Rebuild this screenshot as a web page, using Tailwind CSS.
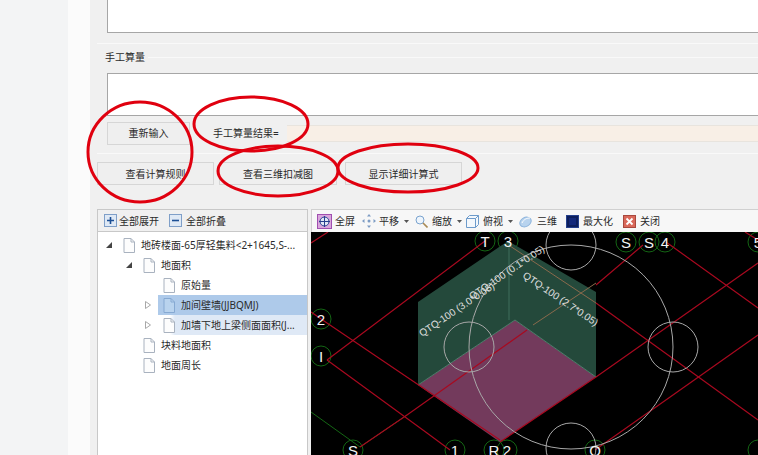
<!DOCTYPE html>
<html lang="zh">
<head>
    <meta charset="UTF-8">
    <title>手工算量</title>
    <script src="https://cdn.jsdelivr.net/npm/@tailwindcss/browser@4"></script>
</head>
<body class="relative w-[758px] h-[455px] overflow-hidden flex bg-white text-[10px] leading-none text-[#2a2a2a] font-['Noto_Sans','Noto_Sans_CJK_SC',sans-serif]">
    <div class="w-[68px] bg-[#f3f4f5]"></div>
    <div class="w-[22px] bg-[#fbfbfb]"></div>

    <main class="flex-1 min-w-0 h-full bg-[#f0f0f0] flex flex-col">
        <div class="ml-[17px] h-[33px] shrink-0 bg-white border-l border-b border-[#a6a6a6]"></div>

        <div class="mt-[10px] ml-[7px] h-[30px] shrink-0 border-t border-[#f9f9f9]">
            <div class="flex items-center h-[26px]">
                <span class="ml-[8px]">手工算量</span>
                <div class="flex-1 ml-[3px] h-px bg-[#f9f9f9]"></div>
            </div>
        </div>

        <div class="ml-[17px] h-[43px] shrink-0 bg-white border border-r-0 border-[#a6a6a6]"></div>

        <div class="ml-[17px] mt-[5px] h-[24px] shrink-0 flex items-center">
            <button class="w-[83px] h-[23px] flex items-center justify-center border border-[#d6d6d6] bg-[#efefef]">重新输入</button>
            <span class="ml-[23px] w-[74px]">手工算量结果=</span>
            <div class="flex-1 h-[17px] bg-[#f8efe6] border-y border-[#e8e4de]"></div>
        </div>

        <div class="ml-[7px] mt-[8px] h-px shrink-0 bg-[#f9f9f9]"></div>

        <div class="ml-[7px] mt-[8px] h-[23px] shrink-0 flex">
            <button class="w-[117px] h-[23px] flex items-center justify-center border border-[#d6d6d6] bg-[#efefef]">查看计算规则</button>
            <button class="ml-[5px] w-[118px] h-[23px] flex items-center justify-center border border-[#d6d6d6] bg-[#efefef]">查看三维扣减图</button>
            <button class="ml-[8px] w-[117px] h-[23px] flex items-center justify-center border border-[#d6d6d6] bg-[#efefef]">显示详细计算式</button>
        </div>

        <div class="ml-[7px] mt-[24px] flex-1 min-h-0 flex">
            <section class="w-[211px] shrink-0 flex flex-col border border-b-0 border-[#c8c8c8]">
                <div class="h-[22px] shrink-0 flex items-center pl-[6px] border-b border-[#c8c8c8] bg-[#f0f0f0]">
                    <svg class="w-[13px] h-[13px]" viewBox="0 0 13 13"><rect x=".5" y=".5" width="12" height="12" fill="#dfe9f5" stroke="#7f9fc8"/><path d="M6.5 3v7M3 6.5h7" stroke="#1c4f94" stroke-width="1.6"/></svg>
                    <span class="ml-[2px]">全部展开</span>
                    <svg class="ml-[10px] w-[13px] h-[13px]" viewBox="0 0 13 13"><rect x=".5" y=".5" width="12" height="12" fill="#dfe9f5" stroke="#7f9fc8"/><path d="M3 6.5h7" stroke="#1c4f94" stroke-width="1.6"/></svg>
                    <span class="ml-[4px]">全部折叠</span>
                </div>
                <div class="flex-1 bg-white pt-[3px]">
                    <div class="flex items-center h-5 pl-[8px]">
                        <svg class="w-[6px] h-[6px]" viewBox="0 0 6 6"><path d="M6 0v6H0z" fill="#444"/></svg>
                        <div class="ml-[11px] flex items-center"><svg class="w-[12px] h-[15px]" viewBox="0 0 12 15"><path d="M1 .5h7l3.500 3.500v10.500h-10.500z" fill="#fdfdfd" stroke="#a9b2bf"/><path d="M8 .5v3.500h3.500" fill="none" stroke="#a9b2bf"/></svg><span class="ml-[6px] whitespace-nowrap">地砖楼面-65厚轻集料&lt;2+1645,S-...</span></div>
                    </div>
                    <div class="flex items-center h-5 pl-[28px]">
                        <svg class="w-[6px] h-[6px]" viewBox="0 0 6 6"><path d="M6 0v6H0z" fill="#444"/></svg>
                        <div class="ml-[11px] flex items-center"><svg class="w-[12px] h-[15px]" viewBox="0 0 12 15"><path d="M1 .5h7l3.500 3.500v10.500h-10.500z" fill="#fdfdfd" stroke="#a9b2bf"/><path d="M8 .5v3.500h3.500" fill="none" stroke="#a9b2bf"/></svg><span class="ml-[6px]">地面积</span></div>
                    </div>
                    <div class="flex items-center h-5 pl-[65px]">
                        <svg class="w-[12px] h-[15px]" viewBox="0 0 12 15"><path d="M1 .5h7l3.500 3.500v10.500h-10.500z" fill="#fdfdfd" stroke="#a9b2bf"/><path d="M8 .5v3.500h3.500" fill="none" stroke="#a9b2bf"/></svg><span class="ml-[6px]">原始量</span>
                    </div>
                    <div class="flex items-center h-5 pl-[47px]">
                        <svg class="w-[6px] h-[8px]" viewBox="0 0 6 8"><path d="M.5.500l5 3.500-5 3.500z" fill="#fff" stroke="#a8a8a8"/></svg>
                        <div class="ml-[7px] flex-1 h-full flex items-center pl-[5px] bg-[#aecaea]"><svg class="w-[12px] h-[15px]" viewBox="0 0 12 15"><path d="M1 .5h7l3.500 3.500v10.500h-10.500z" fill="#b9d3ee" stroke="#86a9d2"/><path d="M8 .5v3.500h3.500" fill="none" stroke="#86a9d2"/></svg><span class="ml-[6px]">加间壁墙(JJBQMJ)</span></div>
                    </div>
                    <div class="flex items-center h-5 pl-[47px]">
                        <svg class="w-[6px] h-[8px]" viewBox="0 0 6 8"><path d="M.5.500l5 3.500-5 3.500z" fill="#fff" stroke="#a8a8a8"/></svg>
                        <div class="ml-[7px] flex-1 h-full flex items-center pl-[5px] bg-[linear-gradient(90deg,#fff_0,#fff_12px,#dfe9f6_17px)]"><svg class="w-[12px] h-[15px]" viewBox="0 0 12 15"><path d="M1 .5h7l3.500 3.500v10.500h-10.500z" fill="#fdfdfd" stroke="#a9b2bf"/><path d="M8 .5v3.500h3.500" fill="none" stroke="#a9b2bf"/></svg><span class="ml-[6px] whitespace-nowrap">加墙下地上梁侧面面积(J...</span></div>
                    </div>
                    <div class="flex items-center h-5 pl-[45px]">
                        <svg class="w-[12px] h-[15px]" viewBox="0 0 12 15"><path d="M1 .5h7l3.500 3.500v10.500h-10.500z" fill="#fdfdfd" stroke="#a9b2bf"/><path d="M8 .5v3.500h3.500" fill="none" stroke="#a9b2bf"/></svg><span class="ml-[6px]">块料地面积</span>
                    </div>
                    <div class="flex items-center h-5 pl-[45px]">
                        <svg class="w-[12px] h-[15px]" viewBox="0 0 12 15"><path d="M1 .5h7l3.500 3.500v10.500h-10.500z" fill="#fdfdfd" stroke="#a9b2bf"/><path d="M8 .5v3.500h3.500" fill="none" stroke="#a9b2bf"/></svg><span class="ml-[6px]">地面周长</span>
                    </div>
                </div>
            </section>

            <section class="ml-[3px] flex-1 min-w-0 flex flex-col">
                <div class="h-[23px] shrink-0 flex items-center pl-[5px] bg-[#f7f7f7] border-t border-l border-[#d0d0d0]">
                    <svg class="w-[15px] h-[15px]" viewBox="0 0 15 15"><rect x=".5" y=".5" width="14" height="14" fill="#d9a6dc" stroke="#a04fb0"/><circle cx="7.500" cy="7.500" r="4.500" fill="#dfe6f5" stroke="#27408f"/><path d="M7.500 2v11M2 7.500h11" stroke="#27408f"/></svg>
                    <span class="ml-[3px]">全屏</span>
                    <svg class="ml-[7px] w-[14px] h-[14px]" viewBox="0 0 14 14" fill="#7d9cc4"><circle cx="7" cy="7" r="1.500"/><path d="M7 0l2 2.500H5zM7 14l-2-2.500h4zM0 7l2.500-2v4zM14 7l-2.500 2V5z"/></svg>
                    <span class="ml-[3px]">平移</span>
                    <svg class="ml-[5px] w-[5px] h-[3px]" viewBox="0 0 5 3"><path d="M0 0h5L2.500 3z" fill="#555"/></svg>
                    <svg class="ml-[6px] w-[13px] h-[13px]" viewBox="0 0 13 13" fill="none"><circle cx="5" cy="5" r="4" fill="#eef5fc" stroke="#7aa3cf"/><path d="M8 8l4.500 4.500" stroke="#a98a55" stroke-width="1.600"/></svg>
                    <span class="ml-[4px]">缩放</span>
                    <svg class="ml-[5px] w-[5px] h-[3px]" viewBox="0 0 5 3"><path d="M0 0h5L2.500 3z" fill="#555"/></svg>
                    <svg class="ml-[4px] w-[13px] h-[13px]" viewBox="0 0 13 13" fill="none"><path d="M.5 3.500l3-3h9v9l-3 3h-9z" fill="#f4f8fc" stroke="#6d9bcb"/><path d="M.5 3.500h9v9M9.500 3.500l3-3" stroke="#6d9bcb"/></svg>
                    <span class="ml-[4px]">俯视</span>
                    <svg class="ml-[5px] w-[5px] h-[3px]" viewBox="0 0 5 3"><path d="M0 0h5L2.500 3z" fill="#555"/></svg>
                    <svg class="ml-[6px] w-[13px] h-[13px]" viewBox="0 0 13 13"><ellipse cx="6.500" cy="7" rx="6" ry="4.500" transform="rotate(-30 6.500 7)" fill="#b8d3ee" stroke="#8db4dc"/><path d="M3 8c2-4 5-5 8-5" stroke="#fff" fill="none"/></svg>
                    <span class="ml-[5px]">三维</span>
                    <svg class="ml-[9px] w-[13px] h-[13px]" viewBox="0 0 13 13"><rect x=".5" y=".5" width="12" height="12" fill="#0d1f5c" stroke="#25408c"/><rect x="3" y="3" width="7" height="7" fill="#14297a"/></svg>
                    <span class="ml-[4px]">最大化</span>
                    <svg class="ml-[10px] w-[13px] h-[13px]" viewBox="0 0 13 13"><rect x=".5" y=".5" width="12" height="12" fill="#d9685a" stroke="#a8483e"/><path d="M3.500 3.500l6 6M9.500 3.500l-6 6" stroke="#fff" stroke-width="1.800"/></svg>
                    <span class="ml-[4px]">关闭</span>
                </div>
                <svg class="block flex-1 min-h-0 w-full bg-black" viewBox="311 232 447 223" font-family="Liberation Sans, sans-serif">
                    <g fill="none" stroke="#146614">
                        <path d="M311 412l49 35 47-32"/>
                        <circle cx="485" cy="241" r="10"/><circle cx="508" cy="241" r="10"/><circle cx="626" cy="242" r="10"/><circle cx="649" cy="242" r="10"/><circle cx="665" cy="242" r="10"/><circle cx="758" cy="242" r="10"/>
                        <circle cx="321" cy="319" r="10"/><circle cx="321" cy="356" r="10"/><circle cx="353" cy="450" r="10"/><circle cx="455" cy="450" r="10"/><circle cx="494" cy="450" r="10"/><circle cx="507" cy="450" r="10"/><circle cx="595" cy="450" r="10"/><circle cx="758" cy="450" r="10"/>
                    </g>
                    <polygon points="418,385 515,320 596,377 500,442" fill="#733a5c"/>
                    <polygon points="418,302 508,241 596,292 596,377 515,320 418,385" fill="#24493b"/>
                    <path d="M509 241v79" stroke="#3f6e5c"/>
                    <path d="M418 385l97-65 81 57" fill="none" stroke="#4f7f6c"/>
                    <g fill="none" stroke="#a8091f" stroke-width="1.200">
                        <path d="M485 241L327 360M327 323l173 117M327 360l100 73 23 17"/>
                        <path d="M360 447l47-32 120-85M596 285l47-40"/>
                        <path d="M596 303l162 117M666 242l92 66M745 232l13 8"/>
                        <path d="M500 442l96-65 162-114M595 450l163-115"/>
                        <path d="M327 323l-16-11M311 243l17-11"/>
                    </g>
                    <path d="M533 325l63-42M510 246l86 57" stroke="#8a6a4c" fill="none"/>
                    <g fill="none" stroke="#a8a8a8">
                        <circle cx="571" cy="347" r="102"/>
                        <circle cx="469" cy="347" r="25"/><circle cx="571" cy="245" r="25"/><circle cx="673" cy="347" r="25"/><circle cx="571" cy="448" r="25"/>
                    </g>
                    <g fill="#e0e0e0" font-size="10">
                        <text transform="translate(422 337) rotate(-34)">QTQ-100 (3.0*0.05)</text>
                        <text transform="translate(472 300) rotate(-34)">QTQ-100 (0.1*0.05)</text>
                        <text transform="translate(522 277) rotate(34)">QTQ-100 (2.7*0.05)</text>
                    </g>
                    <g fill="#f4f4f4" font-size="15" text-anchor="middle">
                        <text x="485" y="247">T</text><text x="508" y="247">3</text><text x="626" y="248">S</text><text x="649" y="248">S</text><text x="665" y="248">4</text><text x="758" y="248">5</text>
                        <text x="321" y="325">2</text><text x="321" y="362">I</text><text x="353" y="456">S</text><text x="455" y="456">1</text><text x="494" y="456">R</text><text x="507" y="456">2</text><text x="595" y="456">Q</text>
                    </g>
                </svg>
            </section>
        </div>
    </main>

    <svg class="absolute inset-0 pointer-events-none" width="758" height="455" fill="none" stroke="#e0000f" stroke-width="3">
        <ellipse cx="140" cy="152" rx="52" ry="50"/>
        <ellipse cx="251" cy="124" rx="57" ry="27"/>
        <ellipse cx="278" cy="171" rx="60" ry="25"/>
        <ellipse cx="408" cy="168" rx="70" ry="24"/>
    </svg>
</body>
</html>
